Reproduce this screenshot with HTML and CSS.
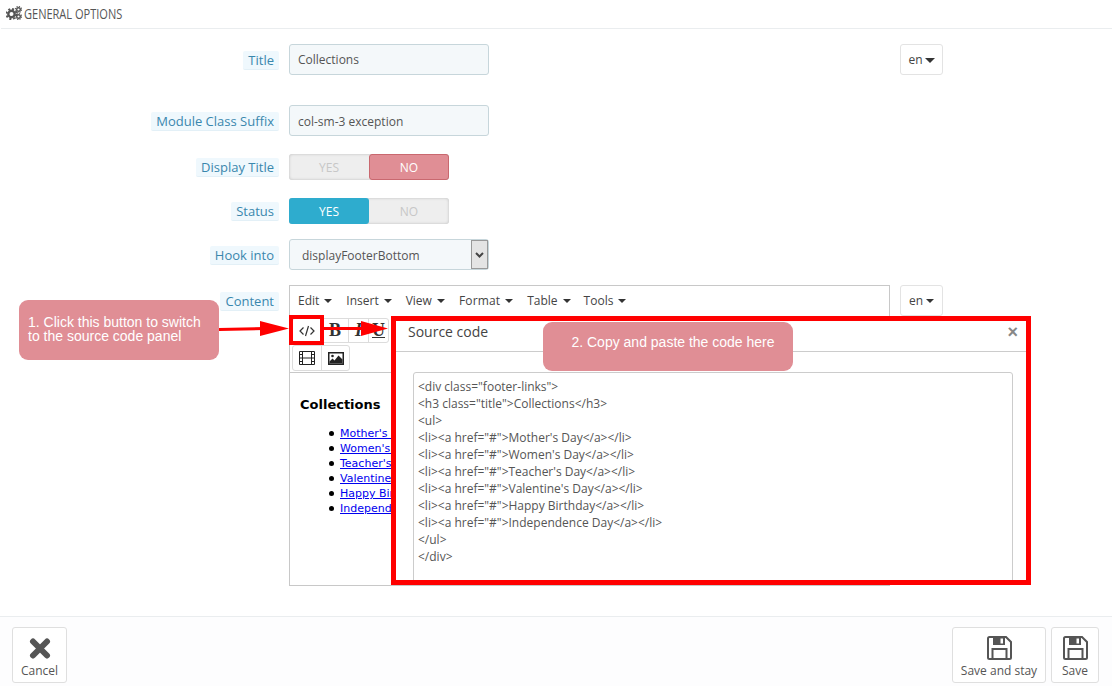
FILE: index.html
```html
<!DOCTYPE html>
<html lang="en">
<head>
<meta charset="utf-8">
<title>General options</title>
<link rel="stylesheet" href="styles.css">
</head>
<body>
<div class="page">
  <header class="head">
    <svg class="gears" width="16" height="14" viewBox="0 0 16 14"><circle cx="5.5" cy="8" r="3.2" fill="none" stroke="#555" stroke-width="2.4"/><circle cx="5.5" cy="8" r="5" fill="none" stroke="#555" stroke-width="2" stroke-dasharray="2 1.93"/><circle cx="12.5" cy="3.5" r="1.8" fill="none" stroke="#555" stroke-width="1.4"/><circle cx="12.5" cy="3.5" r="3" fill="none" stroke="#555" stroke-width="1.2" stroke-dasharray="1.2 1.15"/><circle cx="12.5" cy="10.5" r="1.8" fill="none" stroke="#555" stroke-width="1.4"/><circle cx="12.5" cy="10.5" r="3" fill="none" stroke="#555" stroke-width="1.2" stroke-dasharray="1.2 1.15"/></svg>
    <span class="head-title">GENERAL OPTIONS</span>
  </header>

  <main class="form">
    <div class="row row-title">
      <div class="lab lab-low"><span>Title</span></div>
      <div class="field"><div class="input">Collections</div></div>
      <div class="lang">en<i class="caret caret-big"></i></div>
    </div>
    <div class="row row-suffix">
      <div class="lab lab-low"><span>Module Class Suffix</span></div>
      <div class="field"><div class="input input-low">col-sm-3 exception</div></div>
    </div>
    <div class="row row-display">
      <div class="lab"><span>Display Title</span></div>
      <div class="toggle"><div class="opt">YES</div><div class="opt opt-no">NO</div></div>
    </div>
    <div class="row row-status">
      <div class="lab"><span>Status</span></div>
      <div class="toggle"><div class="opt opt-yes">YES</div><div class="opt">NO</div></div>
    </div>
    <div class="row row-hook">
      <div class="lab lab-low"><span>Hook into</span></div>
      <div class="field"><div class="select"><span class="select-text">displayFooterBottom</span><span class="select-btn"><svg width="9" height="6" viewBox="0 0 9 6"><path d="M1 1l3.5 3.5L8 1" fill="none" stroke="#444" stroke-width="2"/></svg></span></div></div>
    </div>
    <div class="row row-content">
      <div class="lab lab-top"><span>Content</span></div>
      <div class="editor">
        <div class="menubar">
          <span class="mi">Edit<i class="caret"></i></span>
          <span class="mi">Insert<i class="caret"></i></span>
          <span class="mi">View<i class="caret"></i></span>
          <span class="mi mi-format">Format<i class="caret"></i></span>
          <span class="mi mi-table">Table<i class="caret"></i></span>
          <span class="mi">Tools<i class="caret"></i></span>
        </div>
        <div class="toolbar">
          <div class="group">
            <span class="tb tb-code"><svg width="16" height="12" viewBox="0 0 16 12"><path d="M4.5 2.5L1 6l3.5 3.5M11.5 2.5L15 6l-3.5 3.5M9.500 1L6.500 11" fill="none" stroke="#333" stroke-width="1.2"/></svg></span>
            <span class="tb tb-b">B</span>
            <span class="tb tb-i">I</span>
            <span class="tb tb-u">U</span>
          </div>
        </div>
        <div class="toolbar toolbar-2">
          <div class="group group-2">
            <span class="tb tb-media"><svg width="16" height="14" viewBox="0 0 16 14"><path d="M.5.5h15v13H.5zM3.5.5v13M12.5.5v13M3.500 7h9M.5 3.500h3M.5 7h3M.5 10.500h3M12.500 3.500h3M12.500 7h3M12.500 10.500h3" fill="none" stroke="#222"/></svg></span>
            <span class="tb tb-media"><svg width="16" height="13" viewBox="0 0 16 13"><path d="M0 0h16v13H0z" fill="#222"/><path d="M1.500 1.500h13v10h-13z" fill="#fff"/><path d="M1.500 11.500v-2l3-3 2 2 4-5 4 4v4z" fill="#222"/><circle cx="4.500" cy="4" r="1.300" fill="#222"/></svg></span>
          </div>
        </div>
        <div class="doc">
          <h3>Collections</h3>
          <ul>
            <li><a href="#">Mother's Day</a></li>
            <li><a href="#">Women's Day</a></li>
            <li><a href="#">Teacher's Day</a></li>
            <li><a href="#">Valentine's Day</a></li>
            <li><a href="#">Happy Birthday</a></li>
            <li><a href="#">Independence Day</a></li>
          </ul>
        </div>
      </div>
      <div class="lang">en<i class="caret"></i></div>
    </div>
  </main>

  <footer class="foot">
    <div class="btn btn-cancel">
      <svg width="22" height="21" viewBox="0 0 22 21"><path d="M4 3.500l14 14M18 3.500l-14 14" stroke="#555" stroke-width="6" stroke-linecap="round"/></svg>
      <span>Cancel</span>
    </div>
    <div class="foot-right">
      <div class="btn btn-stay">
        <svg width="25" height="24" viewBox="0 0 25 24"><path d="M1 2.500Q1 1 2.500 1H19l5 5v15.500q0 1.500-1.500 1.500h-20Q1 23 1 21.500z" fill="none" stroke="#555" stroke-width="2"/><path d="M6 1h12v8H6z" fill="#555"/><path d="M13.500 2.500h2.500v5h-2.500z" fill="#fff"/><path d="M5.500 22.500V13h14v9.500" fill="none" stroke="#555" stroke-width="2"/></svg>
        <span>Save and stay</span>
      </div>
      <div class="btn btn-save">
        <svg width="25" height="24" viewBox="0 0 25 24"><path d="M1 2.500Q1 1 2.500 1H19l5 5v15.500q0 1.500-1.500 1.500h-20Q1 23 1 21.500z" fill="none" stroke="#555" stroke-width="2"/><path d="M6 1h12v8H6z" fill="#555"/><path d="M13.500 2.500h2.500v5h-2.500z" fill="#fff"/><path d="M5.500 22.500V13h14v9.500" fill="none" stroke="#555" stroke-width="2"/></svg>
        <span>Save</span>
      </div>
    </div>
  </footer>

  <section class="modal">
    <div class="modal-head"><span>Source code</span><b class="close">×</b></div>
    <div class="modal-body">
      <div class="code">&lt;div class="footer-links"&gt;
&lt;h3 class="title"&gt;Collections&lt;/h3&gt;
&lt;ul&gt;
&lt;li&gt;&lt;a href="#"&gt;Mother's Day&lt;/a&gt;&lt;/li&gt;
&lt;li&gt;&lt;a href="#"&gt;Women's Day&lt;/a&gt;&lt;/li&gt;
&lt;li&gt;&lt;a href="#"&gt;Teacher's Day&lt;/a&gt;&lt;/li&gt;
&lt;li&gt;&lt;a href="#"&gt;Valentine's Day&lt;/a&gt;&lt;/li&gt;
&lt;li&gt;&lt;a href="#"&gt;Happy Birthday&lt;/a&gt;&lt;/li&gt;
&lt;li&gt;&lt;a href="#"&gt;Independence Day&lt;/a&gt;&lt;/li&gt;
&lt;/ul&gt;
&lt;/div&gt;</div>
    </div>
  </section>

  <div class="code-mark"></div>
  <svg class="arrows" width="400" height="30" viewBox="0 0 400 30">
    <path d="M0 13.500L45 12.500M104 12.500H146" stroke="#f00" stroke-width="3" fill="none"/>
    <path d="M41 5L70 12.500 41 20zM142 5L169 12.500 142 20z" fill="#f00"/>
  </svg>
  <div class="callout callout-1">1. Click this button to switch<br>to the source code panel</div>
  <div class="callout callout-2">2. Copy and paste the code here</div>
</div>
</body>
</html>
```
FILE: styles.css
```css
* { box-sizing: border-box; }
html, body { margin: 0; padding: 0; background: #fff; }
.page {
  position: relative;
  width: 1112px;
  height: 686px;
  overflow: hidden;
  font-family: "Open Sans", sans-serif;
  font-size: 12px;
  color: #555;
}
.head {
  height: 29px;
  margin-left: 1px;
  padding: 0 0 2px 5px;
  border-bottom: 1px solid #eaedef;
  display: flex;
  align-items: center;
  gap: 2px;
}
.gears { flex: none; }
.head-title {
  display: inline-block;
  font-family: "Open Sans", sans-serif;
  font-size: 15px;
  color: #555;
  white-space: nowrap;
  transform: scaleX(0.735);
  transform-origin: left center;
}
.row {
  display: grid;
  grid-template-columns: 279px 601px 43px;
  column-gap: 10px;
  align-items: center;
}
.row-title { margin-top: 15px; }
.row-suffix { margin-top: 30px; }
.row-display { margin-top: 18px; }
.row-status { margin-top: 18px; }
.row-hook { margin-top: 15px; }
.row-content { margin-top: 15px; align-items: start; }
.lab { text-align: right; font-size: 13px; }
.lab span {
  display: inline-block;
  height: 19px;
  line-height: 19px;
  padding: 0 5px;
  color: #3a87ad;
  background: #eff8fd;
  border-bottom: 1px solid #e3f0f7;
  border-radius: 2px;
}
.lab-low { padding-top: 1px; }
.lab-top { margin-top: 7px; }
.row-title .lab span { line-height: 18px; }
.input {
  width: 200px;
  height: 31px;
  line-height: 29px;
  padding: 0 8px;
  background: #f4f8fa;
  border: 1px solid #c7d6db;
  border-radius: 3px;
  color: #555;
}
.input-low { line-height: 31px; }
.lang {
  height: 31px;
  width: 43px;
  border: 1px solid #e3e3e3;
  border-radius: 3px;
  line-height: 29px;
  text-align: center;
  color: #444;
  background: #fff;
  white-space: nowrap;
}
.caret {
  display: inline-block;
  width: 0;
  height: 0;
  margin-left: 3px;
  vertical-align: 2px;
  border-left: 4px solid transparent;
  border-right: 4px solid transparent;
  border-top: 4px solid #333;
}
.caret-big {
  margin-left: 2px;
  border-left-width: 5px;
  border-right-width: 5px;
  border-top-width: 5px;
  vertical-align: 1px;
}
.toggle {
  display: flex;
  width: 160px;
  height: 26px;
  border-radius: 3px;
  background: #eee;
  box-shadow: inset 0 0 3px #bbb;
}
.opt {
  width: 80px;
  text-align: center;
  line-height: 27px;
  font-size: 12px;
  color: #c7c7c7;
}
.opt-no {
  background: #e08e95;
  border: 1px solid #c9686f;
  border-radius: 3px;
  color: #fff;
  line-height: 25px;
}
.opt-yes {
  background: #2eacce;
  border-radius: 3px;
  color: #fff;
}
.select {
  width: 200px;
  height: 31px;
  display: flex;
  background: #f4f8fa;
  border: 1px solid #c7d6db;
  border-radius: 3px;
}
.select-text { flex: 1; padding-left: 12px; line-height: 32px; color: #555; }
.select-btn {
  width: 17px;
  height: 29px;
  background: #e4e4e4;
  border: 1px solid #999;
  display: flex;
  align-items: center;
  justify-content: center;
}
.editor {
  width: 601px;
  height: 301px;
  border: 1px solid #c8c8c8;
  background: #fff;
  overflow: hidden;
}
.menubar {
  height: 29px;
  margin-bottom: 1px;
  padding-left: 8px;
  display: flex;
  align-items: center;
  gap: 14px;
  color: #444;
  white-space: nowrap;
}
.menubar .caret { margin-left: 5px; }
.mi-format { letter-spacing: 0.15px; }
.mi-table { margin-right: -1px; }
.toolbar { height: 29px; padding-left: 2px; display: flex; align-items: center; }
.toolbar-2 { height: 28px; border-bottom: 1px solid #c8c8c8; align-items: flex-start; }
.group {
  display: flex;
  height: 25px;
  border: 1px solid #dcdcdc;
  border-radius: 3px;
}
.group-2 { height: 26px; }
.tb {
  width: 20px;
  display: flex;
  align-items: center;
  justify-content: center;
  border-left: 1px solid #dcdcdc;
  color: #333;
  font-family: "Liberation Serif", serif;
  font-size: 18px;
  font-weight: 700;
}
.tb:first-child { border-left: 0; }
.tb-code { width: 28px; }
.tb-b { width: 27px; }
.tb-i { font-style: italic; }
.tb-u { text-decoration: underline; }
.tb-media { width: 28px; }
.doc { padding: 24px 10px; font-family: "DejaVu Sans", sans-serif; color: #000; font-size: 11px; }
.doc h3 { margin: 0 0 13px; font-size: 13px; line-height: 16px; font-weight: 700; }
.doc ul { margin: 0; padding-left: 40px; list-style: none; }
.doc li { line-height: 15px; }
.doc li::before {
  content: "";
  display: inline-block;
  width: 5px;
  height: 5px;
  margin: 0 6px 1px -11px;
  border-radius: 50%;
  background: #000;
}
.doc a { color: #00e; }
.foot {
  margin-top: 30px;
  height: 70px;
  padding: 10px 13px 3px 12px;
  border-top: 1px solid #eaedef;
  background: #fdfdfe;
  display: flex;
  justify-content: space-between;
}
.foot-right { display: flex; gap: 5px; }
.btn {
  height: 56px;
  border: 1px solid #dfdfdf;
  border-radius: 3px;
  background: #fff;
  display: flex;
  flex-direction: column;
  align-items: center;
  padding-top: 8px;
  color: #555;
  white-space: nowrap;
}
.btn svg { flex: none; }
.btn span { margin-top: 2px; line-height: 17px; }
.btn-cancel { width: 55px; padding-top: 10px; }
.btn-cancel span { margin-top: 3px; }
.btn-stay { width: 94px; }
.btn-save { width: 48px; }
.modal {
  position: absolute;
  left: 391px;
  top: 316px;
  width: 640px;
  height: 269px;
  border: 5px solid #f00;
  background: #fff;
  overflow: hidden;
}
.modal-head {
  height: 31px;
  padding: 1px 8px 0 12px;
  border-bottom: 1px solid #ccc;
  display: flex;
  justify-content: space-between;
  align-items: flex-start;
  font-size: 14px;
  line-height: 20px;
  color: #444;
}
.close { color: #888; font-size: 18px; line-height: 20px; font-family: "Liberation Sans", sans-serif; }
.modal-body { padding: 20px 13px 0 17px; }
.code {
  height: 220px;
  padding: 5px 4px;
  border: 1px solid #ccc;
  border-radius: 3px;
  white-space: pre;
  font-size: 12px;
  line-height: 17px;
  color: #555;
}
.code-mark {
  position: absolute;
  left: 289px;
  top: 315px;
  width: 35px;
  height: 30px;
  border: 4px solid #f00;
}
.arrows { position: absolute; left: 219px; top: 316px; }
.callout {
  position: absolute;
  background: #e08e95;
  color: #fff;
  font-family: "Liberation Sans", sans-serif;
  font-size: 14px;
}
.callout-1 {
  left: 19px;
  top: 300px;
  width: 200px;
  height: 60px;
  padding: 15px 9px;
  border-radius: 9px;
  line-height: 14px;
}
.callout-2 {
  left: 543px;
  top: 322px;
  width: 250px;
  height: 49px;
  padding-left: 10px;
  border-radius: 9px;
  line-height: 40px;
  text-align: center;
}
```
